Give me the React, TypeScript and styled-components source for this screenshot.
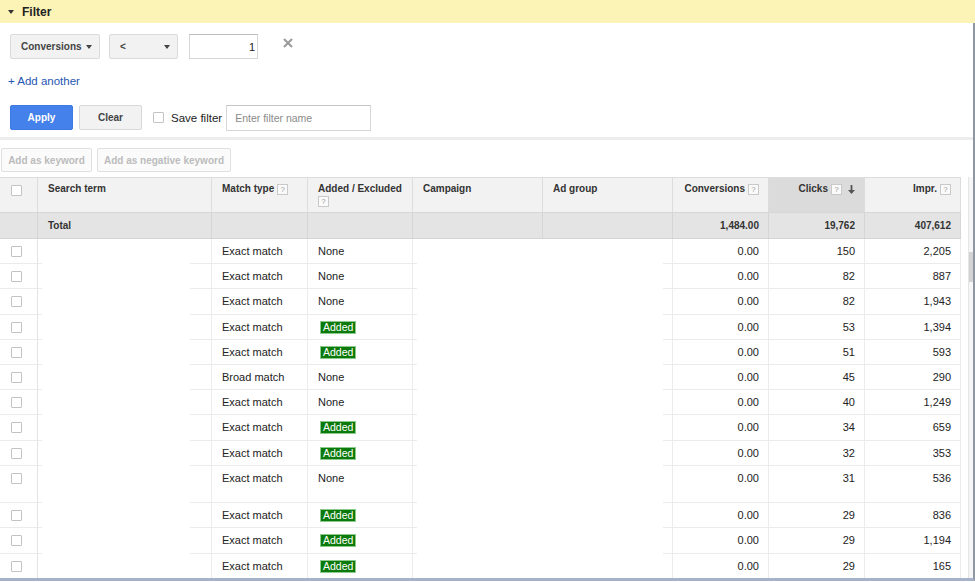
import React from 'react'
import styled, { createGlobalStyle } from 'styled-components'

const GlobalStyle = createGlobalStyle`
  html, body { margin: 0; padding: 0; background: #fff; }
  body { font-family: "Liberation Sans", Arial, sans-serif; color: #222; }
  * { box-sizing: border-box; }
`

const COLS = '38px 174px 96px 105px 130px 130px 96px 96px 96px'

type Row = { match: string; added: boolean; clicks: string; impr: string; tall?: boolean }

const rows: Row[] = [
  { match: 'Exact match', added: false, clicks: '150', impr: '2,205' },
  { match: 'Exact match', added: false, clicks: '82', impr: '887' },
  { match: 'Exact match', added: false, clicks: '82', impr: '1,943' },
  { match: 'Exact match', added: true, clicks: '53', impr: '1,394' },
  { match: 'Exact match', added: true, clicks: '51', impr: '593' },
  { match: 'Broad match', added: false, clicks: '45', impr: '290' },
  { match: 'Exact match', added: false, clicks: '40', impr: '1,249' },
  { match: 'Exact match', added: true, clicks: '34', impr: '659' },
  { match: 'Exact match', added: true, clicks: '32', impr: '353' },
  { match: 'Exact match', added: false, clicks: '31', impr: '536', tall: true },
  { match: 'Exact match', added: true, clicks: '29', impr: '836' },
  { match: 'Exact match', added: true, clicks: '29', impr: '1,194' },
  { match: 'Exact match', added: true, clicks: '29', impr: '165' },
]

const Page = styled.div`
  width: 975px;
  height: 582px;
  padding-bottom: 1px;
  overflow: hidden;
  display: flex;
  flex-direction: column;
`

const FilterBar = styled.div`
  height: 23px;
  flex: none;
  background: #fbf4b6;
  display: flex;
  align-items: center;
  gap: 8px;
  padding-left: 8px;
  font-size: 12px;
  font-weight: bold;
  color: #222;
`

const Caret = styled.span<{ $color?: string }>`
  width: 0;
  height: 0;
  border-left: 3px solid transparent;
  border-right: 3px solid transparent;
  border-top: 4px solid ${p => p.$color || '#444'};
`

const Body = styled.div`
  flex: 1;
  min-height: 0;
  display: flex;
  flex-direction: column;
  border-right: 2px solid #8f97a4;
  border-bottom: 3px solid #a6b2c7;
  overflow: hidden;
`

const FilterPanel = styled.div`
  display: flex;
  flex-direction: column;
  padding: 11px 0 0 10px;
`

const ConditionRow = styled.div`
  display: flex;
  align-items: flex-start;
  height: 25px;
`

const SelectButton = styled.div<{ $width: number; $gap: number }>`
  width: ${p => p.$width}px;
  height: 25px;
  margin-right: ${p => p.$gap}px;
  display: flex;
  align-items: center;
  justify-content: space-between;
  padding: 0 7px 0 10px;
  background: #f2f2f2;
  border: 1px solid #dadada;
  border-radius: 2px;
  font-size: 10px;
  font-weight: bold;
  color: #444;
`

const ValueInput = styled.div`
  width: 69px;
  height: 25px;
  border: 1px solid #d6d6d6;
  border-top-color: #bdbdbd;
  display: flex;
  align-items: center;
  justify-content: flex-end;
  padding-right: 2px;
  font-size: 11px;
  color: #222;
`

const RemoveIcon = styled.svg`
  margin: 4px 0 0 25px;
`

const AddLink = styled.div`
  margin: 16px 0 0 -2px;
  font-size: 11.5px;
  line-height: 13px;
  color: #1f56b3;
`

const ActionRow = styled.div`
  display: flex;
  align-items: center;
  margin-top: 17px;
  height: 25px;
`

const Button = styled.div<{ $primary?: boolean }>`
  width: 63px;
  height: 25px;
  margin-right: ${p => (p.$primary ? 6 : 11)}px;
  display: flex;
  align-items: center;
  justify-content: center;
  border-radius: 2px;
  border: 1px solid ${p => (p.$primary ? '#3d78e3' : '#d8d8d8')};
  background: ${p => (p.$primary ? '#4581ea' : '#f2f2f2')};
  color: ${p => (p.$primary ? '#fff' : '#444')};
  font-size: 10px;
  font-weight: bold;
`

const Checkbox = styled.span`
  display: block;
  width: 11px;
  height: 11px;
  border: 1px solid #c3c3c3;
  border-radius: 1px;
  background: #fff;
`

const SaveLabel = styled.span`
  margin: 0 4px 0 7px;
  font-size: 11.5px;
  color: #222;
`

const NameInput = styled.div`
  width: 145px;
  height: 26px;
  border: 1px solid #d6d6d6;
  border-top-color: #c4c4c4;
  display: flex;
  align-items: center;
  padding-left: 8px;
  font-size: 10.5px;
  color: #8a8a8a;
`

const Divider = styled.div`
  margin-top: 7px;
  height: 3px;
  background: #ededed;
`

const KeywordBar = styled.div`
  display: flex;
  gap: 5px;
  padding: 8px 0 0 1px;
`

const GhostButton = styled.div<{ $width: number }>`
  width: ${p => p.$width}px;
  height: 24px;
  display: flex;
  align-items: center;
  justify-content: center;
  border: 1px solid #e0e0e0;
  border-radius: 2px;
  background: #fbfbfb;
  font-size: 10px;
  font-weight: bold;
  color: #bcbcbc;
`

const TableArea = styled.div`
  flex: 1;
  min-height: 0;
  margin-top: 5px;
  display: flex;
`

const Table = styled.div`
  width: 961px;
  flex: none;
  border-top: 1px solid #dcdcdc;
`

const Gutter = styled.div`
  width: 7px;
  flex: none;
`

const ScrollTrack = styled.div`
  width: 5px;
  flex: none;
  background: #f6f6f6;
  border-left: 1px solid #e4e4e4;
  padding-top: 75px;
`

const ScrollThumb = styled.div`
  height: 30px;
  background: #d3d3d3;
`

const HeadRow = styled.div`
  display: grid;
  grid-template-columns: ${COLS};
  height: 35px;
  background: #f2f2f2;
  border-bottom: 1px solid #d6d6d6;
`

const HeadCell = styled.div<{ $right?: boolean; $sorted?: boolean }>`
  display: flex;
  flex-wrap: wrap;
  align-content: flex-start;
  justify-content: ${p => (p.$right ? 'flex-end' : 'flex-start')};
  gap: 0 3px;
  padding: 5px 9px 0 ${p => (p.$right ? 6 : 10)}px;
  border-right: 1px solid #dcdcdc;
  background: ${p => (p.$sorted ? '#dbdbdb' : 'transparent')};
  font-size: 10px;
  font-weight: bold;
  line-height: 12px;
  color: #333;
`

const CheckCell = styled.div`
  padding: 7px 0 0 11px;
  border-right: 1px solid #e4e4e4;
  border-bottom: 1px solid #ebebeb;
`

const HeadCheckCell = styled(CheckCell)`
  padding-top: 7px;
  border-right-color: #dcdcdc;
  border-bottom: none;
`

const Help = styled.span`
  display: inline-flex;
  align-items: center;
  justify-content: center;
  width: 11px;
  height: 11px;
  margin-top: 1px;
  border: 1px solid #c9c9c9;
  background: #fafafa;
  font-size: 8px;
  font-weight: normal;
  color: #9a9a9a;
`

const LineBreak = styled.span`
  flex-basis: 100%;
  height: 0;
`

const SortArrow = styled.svg`
  margin: 2px 0 0 3px;
`

const TotalRow = styled.div`
  display: grid;
  grid-template-columns: ${COLS};
  height: 26px;
  background: #e4e4e4;
  border-bottom: 1px solid #d4d4d4;
`

const TotalCell = styled.div<{ $right?: boolean }>`
  display: flex;
  align-items: center;
  justify-content: ${p => (p.$right ? 'flex-end' : 'flex-start')};
  padding: 0 9px 0 10px;
  border-right: 1px solid #d6d6d6;
  font-size: 10px;
  font-weight: bold;
  color: #333;
`

const BodyRows = styled.div`
  position: relative;
`

const BodyRow = styled.div<{ $tall?: boolean }>`
  display: grid;
  grid-template-columns: ${COLS};
  height: ${p => (p.$tall ? 37.5 : 25.2)}px;
`

const Cell = styled.div<{ $right?: boolean }>`
  padding: 6px 9px 0 10px;
  text-align: ${p => (p.$right ? 'right' : 'left')};
  border-right: 1px solid #ececec;
  border-bottom: 1px solid #ebebeb;
  font-size: 11px;
  line-height: 13px;
  color: #222;
`

const AddedBadge = styled.span`
  display: inline-block;
  margin-left: 2px;
  padding: 0 2px;
  line-height: 11px;
  border: 1px solid #8cc98c;
  background: #0b7a0b;
  color: #fff;
  font-size: 10.5px;
`

const Redaction = styled.div<{ $left: number; $width: number }>`
  position: absolute;
  top: 0;
  bottom: 0;
  left: ${p => p.$left}px;
  width: ${p => p.$width}px;
  background: #fff;
`

const HelpMark = () => <Help>?</Help>

export default function App() {
  return (
    <Page>
      <GlobalStyle />
      <FilterBar>
        <Caret $color="#333" />
        Filter
      </FilterBar>
      <Body>
        <FilterPanel>
          <ConditionRow>
            <SelectButton $width={90} $gap={9}>
              Conversions <Caret />
            </SelectButton>
            <SelectButton $width={69} $gap={11}>
              &lt; <Caret />
            </SelectButton>
            <ValueInput>1</ValueInput>
            <RemoveIcon width="10" height="10" viewBox="0 0 10 10">
              <path d="M1 1 L9 9 M9 1 L1 9" stroke="#9a9a9a" strokeWidth="2" />
            </RemoveIcon>
          </ConditionRow>
          <AddLink>+ Add another</AddLink>
          <ActionRow>
            <Button $primary>Apply</Button>
            <Button>Clear</Button>
            <Checkbox />
            <SaveLabel>Save filter</SaveLabel>
            <NameInput>Enter filter name</NameInput>
          </ActionRow>
        </FilterPanel>
        <Divider />
        <KeywordBar>
          <GhostButton $width={91}>Add as keyword</GhostButton>
          <GhostButton $width={134}>Add as negative keyword</GhostButton>
        </KeywordBar>
        <TableArea>
          <Table>
            <HeadRow>
              <HeadCheckCell>
                <Checkbox />
              </HeadCheckCell>
              <HeadCell>Search term</HeadCell>
              <HeadCell>
                Match type <HelpMark />
              </HeadCell>
              <HeadCell>
                Added / Excluded
                <LineBreak />
                <HelpMark />
              </HeadCell>
              <HeadCell>Campaign</HeadCell>
              <HeadCell>Ad group</HeadCell>
              <HeadCell $right>
                Conversions <HelpMark />
              </HeadCell>
              <HeadCell $right $sorted>
                Clicks <HelpMark />
                <SortArrow width="7" height="9" viewBox="0 0 7 9">
                  <path d="M2.6 0 H4.4 V5 H7 L3.5 9 L0 5 H2.6 Z" fill="#555" />
                </SortArrow>
              </HeadCell>
              <HeadCell $right>
                Impr. <HelpMark />
              </HeadCell>
            </HeadRow>
            <TotalRow>
              <TotalCell />
              <TotalCell>Total</TotalCell>
              <TotalCell />
              <TotalCell />
              <TotalCell />
              <TotalCell />
              <TotalCell $right>1,484.00</TotalCell>
              <TotalCell $right>19,762</TotalCell>
              <TotalCell $right>407,612</TotalCell>
            </TotalRow>
            <BodyRows>
              {rows.map((r, i) => (
                <BodyRow key={i} $tall={r.tall}>
                  <CheckCell>
                    <Checkbox />
                  </CheckCell>
                  <Cell />
                  <Cell>{r.match}</Cell>
                  <Cell>{r.added ? <AddedBadge>Added</AddedBadge> : 'None'}</Cell>
                  <Cell />
                  <Cell />
                  <Cell $right>0.00</Cell>
                  <Cell $right>{r.clicks}</Cell>
                  <Cell $right>{r.impr}</Cell>
                </BodyRow>
              ))}
              <Redaction $left={42} $width={148} />
              <Redaction $left={417} $width={246} />
            </BodyRows>
          </Table>
          <Gutter />
          <ScrollTrack>
            <ScrollThumb />
          </ScrollTrack>
        </TableArea>
      </Body>
    </Page>
  )
}
